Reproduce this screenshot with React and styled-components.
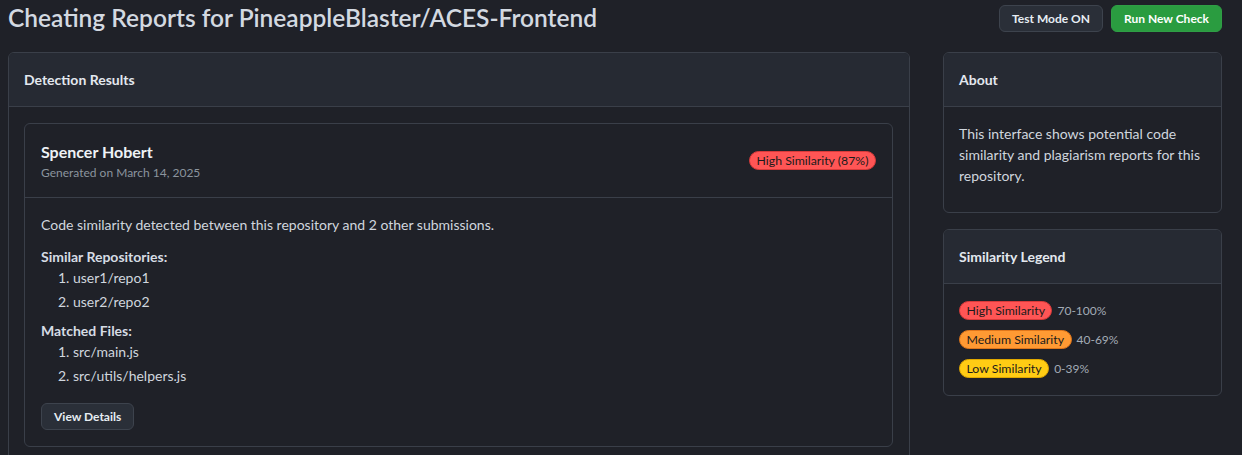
import React from 'react';
import styled, { createGlobalStyle } from 'styled-components';

const Global = createGlobalStyle`
  html, body { margin: 0; padding: 0; background: #1f2128; }
  body {
    font-family: Lato, "Noto Sans", sans-serif;
    color: #c9d1d9;
    font-size: 14px;
  }
  * { box-sizing: border-box; }
`;

const Page = styled.div`
  padding: 0 20px 0 8px;
`;

const TopBar = styled.header`
  display: flex;
  justify-content: space-between;
  align-items: center;
  height: 36px;
  margin-bottom: 16px;
`;

const Title = styled.h1`
  margin: 0;
  font-size: 24.5px;
  font-weight: 600;
  line-height: 1.2;
  color: #d3d9e1;
`;

const Actions = styled.div`
  display: flex;
  gap: 8px;
`;

const Button = styled.button`
  font-family: inherit;
  font-size: 12px;
  font-weight: 700;
  height: 27px;
  padding: 0 12px;
  margin-top: ${p => p.$mt || 0}px;
  border-radius: 6px;
  cursor: pointer;
  color: ${p => (p.$primary ? '#ffffff' : '#e6edf3')};
  background: ${p => (p.$primary ? '#2a9c40' : '#2a2f38')};
  border: 1px solid ${p => (p.$primary ? '#2f9e45' : '#3d434d')};
`;

const Layout = styled.div`
  display: grid;
  grid-template-columns: minmax(0, 1fr) 279px;
  column-gap: 33px;
  align-items: start;
`;

const Side = styled.aside`
  display: flex;
  flex-direction: column;
  gap: 16px;
`;

const Card = styled.section`
  border: 1px solid #3a3f49;
  border-radius: 6px;
  overflow: hidden;
  background: #1f2128;
`;

const CardHeader = styled.div`
  height: 54px;
  padding: 0 15px;
  display: flex;
  align-items: center;
  background: #262a33;
  border-bottom: 1px solid #3a3f49;
  font-size: 14px;
  font-weight: 700;
  color: #e3e8ef;
`;

const CardBody = styled.div`
  padding: 16px 16px 16px 15px;
`;

const Report = styled.div`
  border: 1px solid #3a3f49;
  border-radius: 6px;
`;

const ReportHeader = styled.div`
  height: 74px;
  padding: 16px;
  display: flex;
  justify-content: space-between;
  align-items: center;
  border-bottom: 1px solid #3a3f49;
`;

const Name = styled.div`
  font-size: 16px;
  font-weight: 700;
  line-height: 24px;
  color: #eef2f6;
`;

const Meta = styled.div`
  font-size: 12px;
  line-height: 18px;
  color: #8b949e;
`;

const ReportBody = styled.div`
  padding: 16px;
`;

const Text = styled.p`
  margin: 0 0 ${p => p.$mb || 11}px;
  line-height: 21px;
  color: #d0d6de;
`;

const Label = styled.div`
  font-weight: 700;
  line-height: 21px;
  color: #d6dce4;
`;

const List = styled.ol`
  margin: 0 0 8px;
  padding-left: 32px;
`;

const Item = styled.li`
  line-height: 21px;
  margin-bottom: 3px;
  color: #d0d6de;
`;

const tones = {
  high: { bg: '#ff5555', border: '#d83a3a' },
  medium: { bg: '#ff9a33', border: '#e0761a' },
  low: { bg: '#ffcc14', border: '#e0a800' },
};

const Badge = styled.span`
  display: inline-flex;
  align-items: center;
  height: 19px;
  padding: 0 6.5px;
  border-radius: 10px;
  font-size: 12.3px;
  color: #1b1b1b;
  background: ${p => tones[p.$tone].bg};
  border: 1px solid ${p => tones[p.$tone].border};
`;

const LegendRow = styled.div`
  display: flex;
  align-items: center;
  height: 21px;
  gap: 5px;
  & + & { margin-top: 8px; }
`;

const Range = styled.span`
  font-size: 12px;
  color: #a3abb6;
`;

export default function App() {
  return (
    <>
      <Global />
      <Page>
        <TopBar>
          <Title>Cheating Reports for PineappleBlaster/ACES-Frontend</Title>
          <Actions>
            <Button>Test Mode ON</Button>
            <Button $primary>Run New Check</Button>
          </Actions>
        </TopBar>
        <Layout>
          <Card>
            <CardHeader>Detection Results</CardHeader>
            <CardBody>
              <Report>
                <ReportHeader>
                  <div>
                    <Name>Spencer Hobert</Name>
                    <Meta>Generated on March 14, 2025</Meta>
                  </div>
                  <Badge $tone="high">High Similarity (87%)</Badge>
                </ReportHeader>
                <ReportBody>
                  <Text>Code similarity detected between this repository and 2 other submissions.</Text>
                  <Label>Similar Repositories:</Label>
                  <List>
                    <Item>user1/repo1</Item>
                    <Item>user2/repo2</Item>
                  </List>
                  <Label>Matched Files:</Label>
                  <List>
                    <Item>src/main.js</Item>
                    <Item>src/utils/helpers.js</Item>
                  </List>
                  <Button $mt={9}>View Details</Button>
                </ReportBody>
              </Report>
            </CardBody>
          </Card>
          <Side>
            <Card>
              <CardHeader>About</CardHeader>
              <CardBody>
                <Text $mb={10}>
                  This interface shows potential code similarity and plagiarism reports for this repository.
                </Text>
              </CardBody>
            </Card>
            <Card>
              <CardHeader>Similarity Legend</CardHeader>
              <CardBody>
                <LegendRow><Badge $tone="high">High Similarity</Badge><Range>70-100%</Range></LegendRow>
                <LegendRow><Badge $tone="medium">Medium Similarity</Badge><Range>40-69%</Range></LegendRow>
                <LegendRow><Badge $tone="low">Low Similarity</Badge><Range>0-39%</Range></LegendRow>
              </CardBody>
            </Card>
          </Side>
        </Layout>
      </Page>
    </>
  );
}
